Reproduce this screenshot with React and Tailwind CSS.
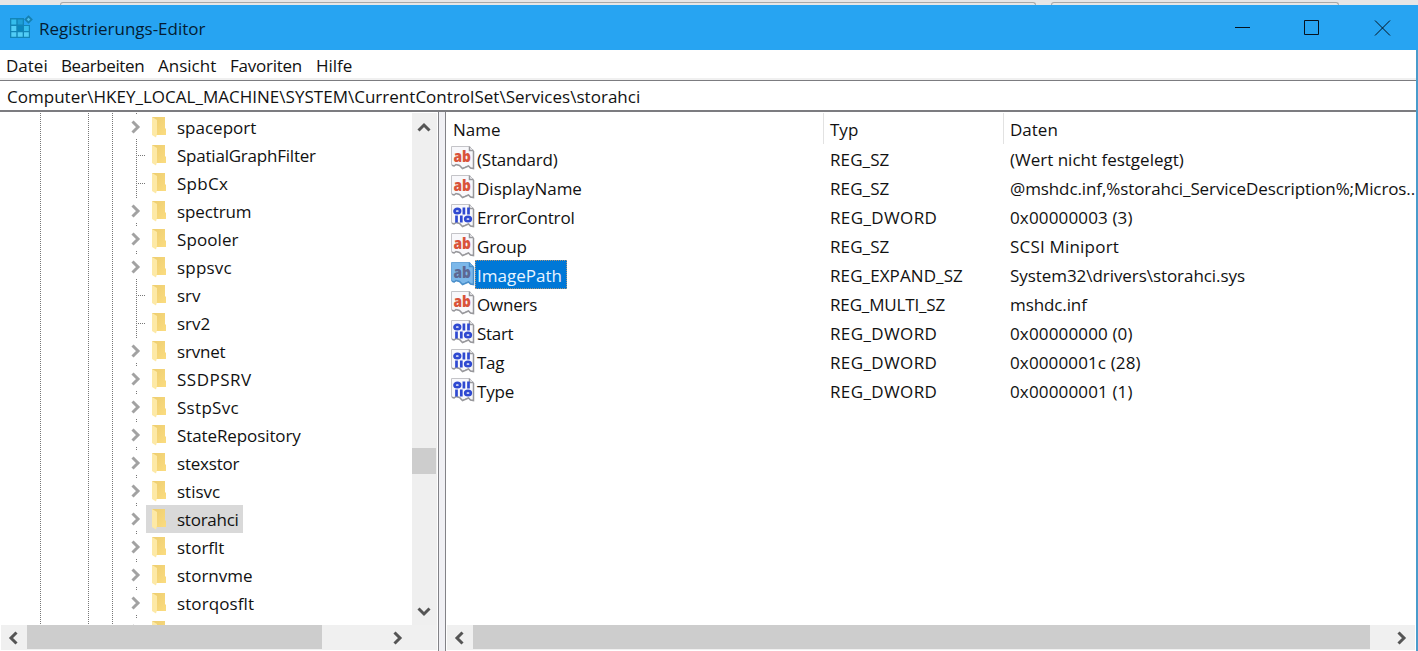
import React from 'react';
import clsx from 'clsx';

const menu = [
  { label: 'Datei', cls: 'w-[55px]' },
  { label: 'Bearbeiten', cls: 'w-[97px] tracking-[-0.4px]' },
  { label: 'Ansicht', cls: 'w-[72px]' },
  { label: 'Favoriten', cls: 'w-[86px] tracking-[-0.25px]' },
  { label: 'Hilfe', cls: 'w-[50px]' },
];

const keys = [
  { name: 'spaceport' },
  { name: 'SpatialGraphFilter', leaf: true, cls: 'tracking-[-0.22px]' },
  { name: 'SpbCx', leaf: true, cls: 'tracking-[0.3px]' },
  { name: 'spectrum', cls: 'tracking-[-0.12px]' },
  { name: 'Spooler', cls: 'tracking-[0.1px]' },
  { name: 'sppsvc', cls: 'tracking-[0.2px]' },
  { name: 'srv', leaf: true },
  { name: 'srv2', leaf: true },
  { name: 'srvnet', cls: 'tracking-[-0.2px]' },
  { name: 'SSDPSRV', cls: 'tracking-[0.5px]' },
  { name: 'SstpSvc', cls: 'tracking-[0.3px]' },
  { name: 'StateRepository', cls: 'tracking-[-0.1px]' },
  { name: 'stexstor', cls: 'tracking-[-0.2px]' },
  { name: 'stisvc' },
  { name: 'storahci', selected: true, cls: 'tracking-[-0.25px]' },
  { name: 'storflt' },
  { name: 'stornvme' },
  { name: 'storqosflt', cls: 'tracking-[0.1px]' },
  { name: '' },
];

const values = [
  { name: '(Standard)', type: 'REG_SZ', data: '(Wert nicht festgelegt)', cls: 'tracking-[-0.2px]' },
  { name: 'DisplayName', type: 'REG_SZ', data: '@mshdc.inf,%storahci_ServiceDescription%;Micros..', dataCls: 'tracking-[-0.1px]' },
  { name: 'ErrorControl', type: 'REG_DWORD', data: '0x00000003 (3)', binary: true, cls: 'tracking-[-0.15px]', dataCls: 'tracking-[0.15px]' },
  { name: 'Group', type: 'REG_SZ', data: 'SCSI Miniport', cls: 'tracking-[-0.1px]', dataCls: 'tracking-[0.2px]' },
  { name: 'ImagePath', type: 'REG_EXPAND_SZ', data: 'System32\\drivers\\storahci.sys', selected: true, dataCls: 'tracking-[-0.06px]' },
  { name: 'Owners', type: 'REG_MULTI_SZ', data: 'mshdc.inf', cls: 'tracking-[-0.2px]', dataCls: 'tracking-[-0.1px]' },
  { name: 'Start', type: 'REG_DWORD', data: '0x00000000 (0)', binary: true, cls: 'tracking-[-0.3px]', dataCls: 'tracking-[0.15px]' },
  { name: 'Tag', type: 'REG_DWORD', data: '0x0000001c (28)', binary: true, cls: 'tracking-[-0.3px]', dataCls: 'tracking-[0.13px]' },
  { name: 'Type', type: 'REG_DWORD', data: '0x00000001 (1)', binary: true, cls: 'tracking-[-0.2px]', dataCls: 'tracking-[0.15px]' },
];

const typeTracking = {
  REG_SZ: 'tracking-[0.1px]',
  REG_DWORD: 'tracking-[0.38px]',
  REG_EXPAND_SZ: 'tracking-[0.1px]',
  REG_MULTI_SZ: 'tracking-[-0.15px]',
};

function RegeditIcon() {
  return (
    <svg width="24" height="24" viewBox="0 0 24 24" className="shrink-0">
      <path d="M1 3h14v7h6v13H1z" fill="#1285b8" />
      <path d="M2.300 11h5v5h-5zM2.300 17.200h5v4.600h-5zM8.700 17.200h5v4.600h-5zM15 17.200h4.800v4.600H15z" fill="#52cdf6" />
      <path d="M2.300 4.500h5v5h-5zM15 11h4.800v5H15z" fill="#35bdec" />
      <path d="M8.700 4.500h5v5h-5z" fill="#1f9fd6" />
      <path d="M8.700 11h5v5h-5z" fill="#0a86bd" />
      <path d="M19.500 1.400l3.100 3.100-3.100 3.100-3.100-3.100z" fill="#4cc0ee" stroke="#1580b2" strokeWidth="1.800" />
    </svg>
  );
}

function FolderIcon() {
  return (
    <svg width="14" height="21" viewBox="0 0 14 21" className="shrink-0">
      <defs>
        <linearGradient id="folderBack" x1="0" y1="0" x2="1" y2="1">
          <stop offset="0" stopColor="#edcd70" />
          <stop offset="1" stopColor="#fbdc80" />
        </linearGradient>
      </defs>
      <path d="M0 0h13v11l1 1v6H0z" fill="url(#folderBack)" />
      <path d="M0 0l5 3v14l-1 3.500L0 18z" fill="#fde9a6" />
    </svg>
  );
}

function ValueIcon({ binary, selected }) {
  return (
    <svg width="24" height="24" viewBox="0 0 24 24" className="shrink-0">
      <path
        d="M.5 .5h18l4 4v18l-3-.5-2-2-3 1-3 1.500-3-3-3-1-2 1.500-3-1z"
        fill={selected ? '#7cb8ea' : '#f8f8fb'}
        stroke={selected ? '#6ba6d8' : '#c4c4c8'}
      />
      <path
        d="M22.500 5v17.500l-3-.5-2-2-3.500 1.500-2.500 1-3-3-3.500-1-2 1.500-2-.8M18.500 .5v4h4"
        fill="none"
        stroke={selected ? '#4a8fca' : '#98989c'}
        strokeWidth="1.500"
      />
      {binary ? (
        <g fill="none" stroke="#2f49d1" strokeWidth="2.700">
          <ellipse cx="6.300" cy="7" rx="2.800" ry="2.200" />
          <path d="M12.900 3.500v7M17.500 3.500v7M5.500 11.500v7M10.300 11.500v7" />
          <ellipse cx="17" cy="15" rx="2.800" ry="2.200" />
        </g>
      ) : (
        <text
          x="2.500"
          y="15.800"
          textLength="17.500"
          lengthAdjust="spacingAndGlyphs"
          fontFamily="Open Sans"
          fontWeight="800"
          fontSize="15"
          fill={selected ? '#5d6893' : '#d9533a'}
        >
          ab
        </text>
      )}
    </svg>
  );
}

const arrows = {
  left: 'M9.500 1.500L4 7l5.500 5.500',
  right: 'M4.500 1.500L10 7l-5.500 5.500',
  up: 'M1.500 9.500L7 4l5.500 5.500',
  down: 'M1.500 4.500L7 10l5.500-5.500',
};

function Arrow({ dir, color = '#555555' }) {
  return (
    <svg width="14" height="14" viewBox="0 0 14 14" className="shrink-0">
      <path d={arrows[dir]} fill="none" stroke={color} strokeWidth="3" />
    </svg>
  );
}

function TreeRow({ item }) {
  return (
    <div className="flex h-7 shrink-0 items-start">
      {item.leaf ? (
        <div className="mt-[14px] ml-[138px] h-px w-2 bg-[repeating-linear-gradient(to_right,#777_0_1px,transparent_1px_2px)]" />
      ) : (
        <div className="mt-px ml-[128px] flex h-[25px] w-[15px] items-center bg-white pt-px">
          <Arrow dir="right" color="#a2a2a2" />
        </div>
      )}
      <div
        className={clsx(
          'flex h-7 items-start pr-1 pl-1.5',
          item.leaf ? '' : 'ml-[3px]',
          item.selected && 'bg-[#d9d9d9]'
        )}
      >
        <div className="pt-1">
          <FolderIcon />
        </div>
        <span className={clsx('ml-[11px] pt-px leading-7', item.cls)}>{item.name}</span>
      </div>
    </div>
  );
}

function Guide({ className }) {
  return (
    <div
      className={clsx(
        'absolute top-px bottom-0 w-px bg-[repeating-linear-gradient(to_bottom,#777_0_1px,transparent_1px_2px)]',
        className
      )}
    />
  );
}

export default function App() {
  return (
    <div className="flex h-[651px] w-[1418px] flex-col overflow-hidden bg-white font-['Open_Sans',sans-serif] text-[17px] whitespace-nowrap text-[#111]">
      {/* window edge behind the title bar */}
      <div className="flex h-[5px] shrink-0 items-end bg-[#e6e6e6] pl-[60px]">
        <div className="h-[3px] w-[976px] rounded-t-sm border border-b-0 border-[#a9a9a9]" />
        <div className="ml-[15px] h-[3px] w-[288px] rounded-t-sm border border-b-0 border-[#a9a9a9]" />
      </div>

      <header className="flex h-[45px] shrink-0 items-center bg-[#27a4f2] text-[#041c33]">
        <div className="ml-[9px] -mt-px">
          <RegeditIcon />
        </div>
        <span className="ml-1.5 pt-0.5">Registrierungs-Editor</span>
        <div className="mr-[27px] ml-auto flex items-center">
          <svg width="156" height="16" viewBox="0 0 156 16" fill="none" stroke="#06121e">
            <path d="M0 7.500h15M69.500 .5h14v14h-14zM140 .5l15 15M155 .5l-15 15" />
          </svg>
        </div>
      </header>

      <div className="flex min-h-0 grow flex-col border-r-2 border-[#4a9bcb]">
        <nav className="flex h-[30px] shrink-0 items-center border-b-2 border-[#f0f0f0] pl-1.5">
          {menu.map((m) => (
            <span key={m.label} className={clsx('shrink-0 pt-[3px]', m.cls)}>
              {m.label}
            </span>
          ))}
        </nav>
        <div className="flex h-8 shrink-0 items-center border-t border-b-2 border-[#7c7c80] pl-[7px]">
          <span className="pt-0.5 tracking-[0.02px]">
            Computer\HKEY_LOCAL_MACHINE\SYSTEM\CurrentControlSet\Services\storahci
          </span>
        </div>

        <div className="flex min-h-0 grow">
          {/* key tree */}
          <div className="flex w-[439px] shrink-0 flex-col border-r border-[#828287]">
            <div className="flex h-[513px]">
              <div className="relative w-[412px] overflow-hidden pt-px">
                <Guide className="left-10" />
                <Guide className="left-[88px]" />
                <Guide className="left-28" />
                <Guide className="left-[136px]" />
                <div className="relative flex flex-col">
                  {keys.map((item, i) => (
                    <TreeRow key={i} item={item} />
                  ))}
                </div>
              </div>
              <div className="mt-px mr-px flex w-[25px] flex-col items-center bg-[#efefef]">
                <div className="mr-px flex h-[30px] items-center">
                  <Arrow dir="up" />
                </div>
                <div className="mt-[305px] mr-px h-[26px] w-6 self-end bg-[#cdcdcd]" />
                <div className="mt-auto mr-px flex h-7 items-center">
                  <Arrow dir="down" />
                </div>
              </div>
            </div>
            <div className="mr-px ml-px flex h-[25px] items-center bg-[#f0f0f0]">
              <div className="flex w-[26px] justify-center">
                <Arrow dir="left" />
              </div>
              <div className="h-6 w-[295px] self-start bg-[#cdcdcd]" />
              <div className="ml-[68px]">
                <Arrow dir="right" />
              </div>
            </div>
          </div>

          <div className="w-1.5 shrink-0 bg-[#f0f0f4]" />

          {/* value list */}
          <div className="flex min-w-0 grow flex-col border-l border-[#828287]">
            <div className="flex h-[513px] flex-col overflow-hidden">
              <div className="flex h-8 shrink-0 items-stretch pt-px leading-[33px]">
                <span className="w-[378px] border-r border-[#e2e2e2] pl-[7px]">Name</span>
                <span className="w-[180px] border-r border-[#e2e2e2] pl-1.5">Typ</span>
                <span className="pl-1.5">Daten</span>
              </div>
              {values.map((v) => (
                <div key={v.name} className="flex h-[29px] shrink-0 items-start leading-[31px]">
                  <div className="flex w-[378px] shrink-0 pl-[5px]">
                    <div className="pt-0.5">
                      <ValueIcon binary={v.binary} selected={v.selected} />
                    </div>
                    <span
                      className={clsx(
                        'h-[29px] border border-dotted pr-1 pl-px leading-[29px]',
                        v.selected ? 'border-[#a8947c] bg-[#0078d7] text-[#e9f4ff]' : 'border-transparent',
                        v.cls
                      )}
                    >
                      {v.name}
                    </span>
                  </div>
                  <span className={clsx('w-[180px] shrink-0 pl-1.5', typeTracking[v.type])}>{v.type}</span>
                  <span className={clsx('shrink-0 pl-1.5', v.dataCls)}>{v.data}</span>
                </div>
              ))}
            </div>
            <div className="mr-px ml-px flex h-[25px] items-center bg-[#f0f0f0]">
              <div className="flex w-[26px] justify-center">
                <Arrow dir="left" />
              </div>
              <div className="h-6 w-[897px] self-start bg-[#cdcdcd]" />
              <div className="mr-[7px] ml-auto">
                <Arrow dir="right" />
              </div>
            </div>
          </div>
        </div>
      </div>
    </div>
  );
}
